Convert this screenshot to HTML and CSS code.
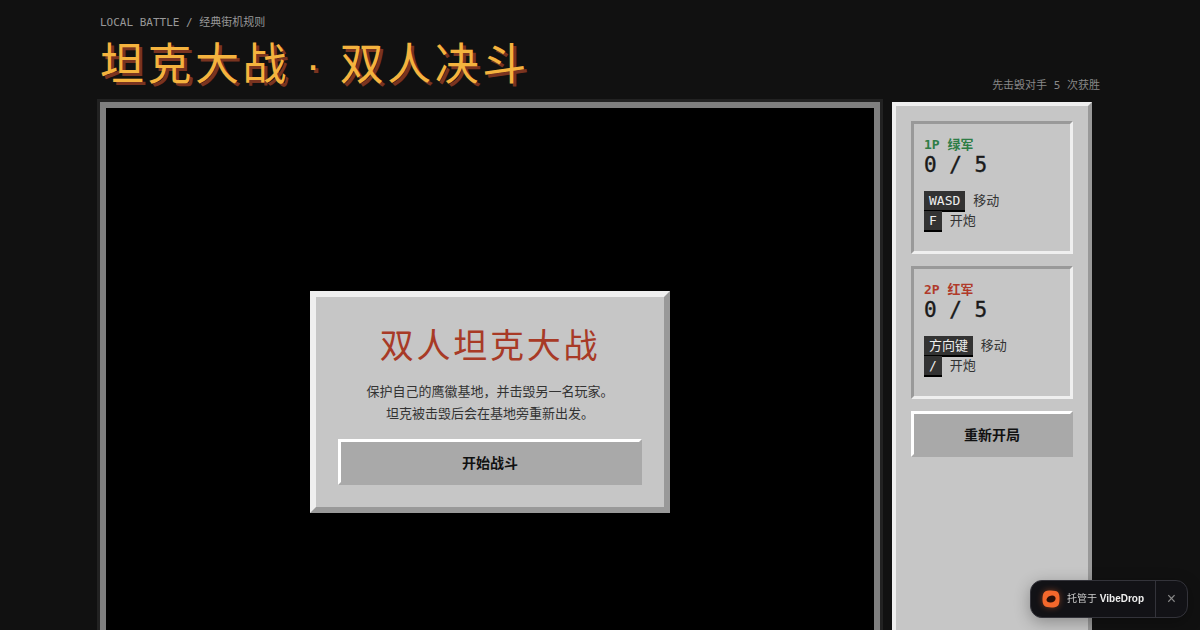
FILE: index.html
```html
<!DOCTYPE html>
<html lang="zh-CN">
<head>
    <meta charset="UTF-8">
    <meta name="viewport" content="width=device-width, initial-scale=1.0">
    <title>坦克大战 · 双人决斗</title>
    <link rel="stylesheet" href="styles.css">
</head>
<body>
    <div class="page">
        <header class="header">
            <div>
                <div class="eyebrow">LOCAL BATTLE / 经典街机规则</div>
                <h1 class="title">坦克大战 · 双人决斗</h1>
            </div>
            <div class="goal">先击毁对手 5 次获胜</div>
        </header>
        <main class="layout">
            <div class="board">
                <div class="modal">
                    <h2 class="modal-title">双人坦克大战</h2>
                    <p class="modal-text">保护自己的鹰徽基地，并击毁另一名玩家。<br>坦克被击毁后会在基地旁重新出发。</p>
                    <button class="btn">开始战斗</button>
                </div>
            </div>
            <aside class="panel">
                <section class="player">
                    <div class="player-name green">1P 绿军</div>
                    <div class="score">0 / 5</div>
                    <div class="keys">
                        <div><kbd>WASD</kbd> 移动</div>
                        <div><kbd>F</kbd> 开炮</div>
                    </div>
                </section>
                <section class="player">
                    <div class="player-name red">2P 红军</div>
                    <div class="score">0 / 5</div>
                    <div class="keys">
                        <div><kbd>方向键</kbd> 移动</div>
                        <div><kbd>/</kbd> 开炮</div>
                    </div>
                </section>
                <button class="btn">重新开局</button>
            </aside>
        </main>
    </div>

    <div class="badge">
        <div class="badge-main">
            <svg class="badge-logo" width="18" height="18" viewBox="0 0 18 18">
                <path d="M5 .8C7.500 .2 11 .3 13.500 .9C15.800 1.500 17 3 17.300 5.500C17.700 8 17.600 11 17.100 13.300C16.600 15.800 15 17 12.800 17.300C10.500 17.700 7.500 17.600 5 17.100C2.500 16.600 1.200 15 .8 12.800C.4 10.500 .4 7.500 .9 5C1.300 2.800 2.800 1.300 5 .8Z" fill="#f4682c"/>
                <path d="M4.500 9.600C4.800 7.400 7 5.600 10 5.400C12.300 5.300 13.800 6.800 13.600 8.800C13.400 11 11.200 12.500 8.700 12.600C6.200 12.700 4.300 11.600 4.500 9.600Z" fill="#2a0f08"/>
            </svg>
            <span class="badge-text">托管于 <b>VibeDrop</b></span>
        </div>
        <div class="badge-close">×</div>
    </div>
</body>
</html>
```

FILE: styles.css
```css
* {
    box-sizing: border-box;
}

html, body {
    height: 630px;
    overflow: hidden;
}

body {
    margin: 0;
    background-color: #111;
    color: #1a1a1a;
    font-family: "DejaVu Sans Mono", "Noto Sans CJK SC", monospace;
}

.page {
    width: 1000px;
    height: 630px;
    margin-left: 100px;
    overflow-x: visible;
    overflow-y: clip;
}

.header {
    display: flex;
    justify-content: space-between;
    align-items: flex-end;
    height: 102px;
    padding-top: 15px;
    padding-bottom: 8px;
}

.eyebrow {
    font-size: 11px;
    line-height: 16px;
    color: #999;
}

.title {
    margin: 2px 0 -2px;
    font-family: "Liberation Sans", "Noto Sans CJK SC", sans-serif;
    font-size: 44px;
    font-weight: 400;
    line-height: 63px;
    letter-spacing: 0.08em;
    color: #f5b33e;
    text-shadow: 3px 3px 0 #7a3420;
}

.goal {
    font-size: 11px;
    line-height: 16px;
    color: #888;
}

.layout {
    display: flex;
    align-items: flex-start;
    gap: 12px;
}

.board {
    display: flex;
    justify-content: center;
    flex-shrink: 0;
    width: 780px;
    height: 780px;
    padding-top: 183px;
    background-color: #000;
    border: 6px solid #7f7f7f;
    box-shadow: 0 0 0 3px #222;
}

.modal {
    width: 360px;
    height: 222px;
    padding: 24px 22px 0;
    background-color: #c6c6c6;
    border: 6px solid;
    border-color: #efefef #999 #999 #efefef;
    text-align: center;
}

.modal-title {
    margin: 0;
    font-family: "Noto Sans CJK SC", sans-serif;
    font-size: 34px;
    font-weight: 400;
    line-height: 46px;
    letter-spacing: 0.08em;
    color: #a83a26;
}

.modal-text {
    margin: 13px 0 0;
    font-family: "Noto Sans CJK SC", sans-serif;
    font-size: 13px;
    line-height: 22px;
    color: #333;
}

.btn {
    display: block;
    width: 100%;
    height: 46px;
    margin-top: 15px;
    padding: 0;
    background-color: #a9a9a9;
    border: 3px solid;
    border-color: #fff #a9a9a9 #a9a9a9 #fff;
    font-family: "Noto Sans CJK SC", sans-serif;
    font-size: 14px;
    font-weight: 700;
    color: #111;
}

.panel {
    display: flex;
    flex-direction: column;
    gap: 12px;
    flex-shrink: 0;
    width: 200px;
    height: 700px;
    padding: 15px;
    background-color: #c6c6c6;
    border: 4px solid;
    border-color: #efefef #999 #999 #efefef;
}

.player {
    height: 133px;
    padding: 13px 10px 0;
    border: 3px solid;
    border-color: #999 #efefef #efefef #999;
}

.player-name {
    font-size: 13px;
    font-weight: 700;
    line-height: 16px;
}

.green {
    color: #2f7d46;
}

.red {
    color: #b03a2a;
}

.score {
    font-size: 21px;
    font-weight: 400;
    line-height: 24px;
    -webkit-text-stroke: 0.4px #1a1a1a;
}

.keys {
    margin-top: 14px;
    font-size: 13px;
    line-height: 1.5;
    color: #333;
}

kbd {
    padding: 2px 5px;
    background-color: #333;
    border-bottom: 2px solid #000;
    font-family: inherit;
    font-size: 13px;
    color: #eee;
}

.panel .btn {
    margin-top: 0;
    flex-shrink: 0;
}

.badge {
    position: fixed;
    right: 12px;
    bottom: 12px;
    display: flex;
    align-items: stretch;
    width: 158px;
    height: 38px;
    background-color: #121216;
    border: 1px solid #33333a;
    border-radius: 12px;
    box-shadow: 0 4px 16px rgba(0, 0, 0, 0.3);
    font-family: "Liberation Sans", "Noto Sans CJK SC", sans-serif;
}

.badge-main {
    display: flex;
    align-items: center;
    gap: 7px;
    flex: 1;
    padding-left: 11px;
}

.badge-logo {
    filter: drop-shadow(0 0 3px rgba(244, 104, 44, 0.45));
}

.badge-text {
    font-size: 10px;
    line-height: 16px;
    color: #ccc;
}

.badge-text b {
    color: #eee;
}

.badge-close {
    width: 32px;
    border-left: 1px solid #33333a;
    font-size: 16px;
    line-height: 36px;
    text-align: center;
    color: #888;
}
```
